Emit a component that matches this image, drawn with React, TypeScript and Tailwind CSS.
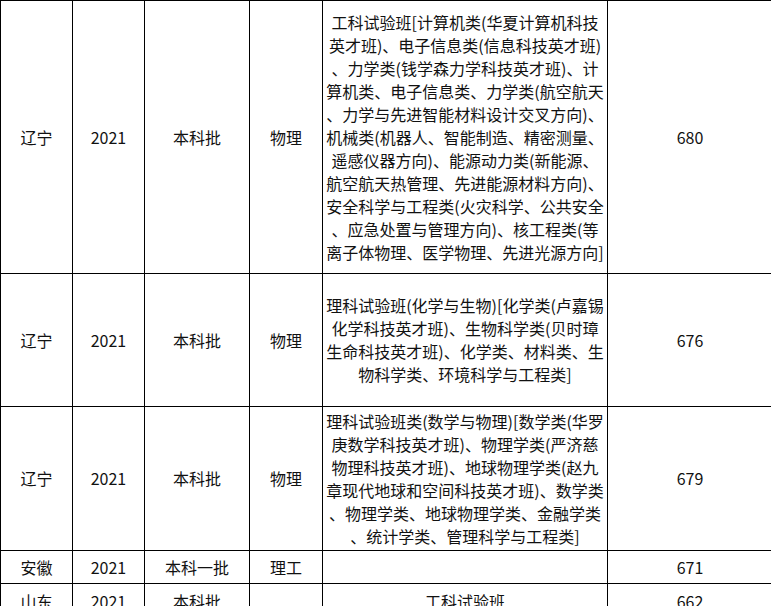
import React from 'react';

interface Row {
  province: string;
  year: string;
  batch: string;
  subject: string;
  major: string[];
  score: string;
  height: string;
}

const rows: Row[] = [
  {
    province: '辽宁',
    year: '2021',
    batch: '本科批',
    subject: '物理',
    major: [
      '工科试验班[计算机类(华夏计算机科技',
      '英才班)、电子信息类(信息科技英才班)',
      '、力学类(钱学森力学科技英才班)、计',
      '算机类、电子信息类、力学类(航空航天',
      '、力学与先进智能材料设计交叉方向)、',
      '机械类(机器人、智能制造、精密测量、',
      '遥感仪器方向)、能源动力类(新能源、',
      '航空航天热管理、先进能源材料方向)、',
      '安全科学与工程类(火灾科学、公共安全',
      '、应急处置与管理方向)、核工程类(等',
      '离子体物理、医学物理、先进光源方向]',
    ],
    score: '680',
    height: 'h-[273px]',
  },
  {
    province: '辽宁',
    year: '2021',
    batch: '本科批',
    subject: '物理',
    major: [
      '理科试验班(化学与生物)[化学类(卢嘉锡',
      '化学科技英才班)、生物科学类(贝时璋',
      '生命科技英才班)、化学类、材料类、生',
      '物科学类、环境科学与工程类]',
    ],
    score: '676',
    height: 'h-[133px]',
  },
  {
    province: '辽宁',
    year: '2021',
    batch: '本科批',
    subject: '物理',
    major: [
      '理科试验班类(数学与物理)[数学类(华罗',
      '庚数学科技英才班)、物理学类(严济慈',
      '物理科技英才班)、地球物理学类(赵九',
      '章现代地球和空间科技英才班)、数学类',
      '、物理学类、地球物理学类、金融学类',
      '、统计学类、管理科学与工程类]',
    ],
    score: '679',
    height: 'h-[144px]',
  },
  {
    province: '安徽',
    year: '2021',
    batch: '本科一批',
    subject: '理工',
    major: [],
    score: '671',
    height: 'h-[33px]',
  },
  {
    province: '山东',
    year: '2021',
    batch: '本科批',
    subject: '',
    major: ['工科试验班'],
    score: '662',
    height: 'h-[36px]',
  },
];

export default function App() {
  return (
    <div className="w-[771px] h-[606px] overflow-hidden bg-white">
      <table className="table-fixed border-collapse w-[772px] text-[16px] leading-[23px] text-[#111] font-['Noto_Sans_CJK_SC','Noto_Sans',sans-serif]">
        <colgroup>
          <col className="w-[72px]" />
          <col className="w-[72px]" />
          <col className="w-[105px]" />
          <col className="w-[73px]" />
          <col className="w-[285px]" />
          <col className="w-[165px]" />
        </colgroup>
        <tbody>
          {rows.map((r, i) => (
            <tr key={i}>
              <td className={`${r.height} border border-black text-center align-middle p-0`}>{r.province}</td>
              <td className="border border-black text-center align-middle p-0">{r.year}</td>
              <td className="border border-black text-center align-middle p-0">{r.batch}</td>
              <td className="border border-black text-center align-middle p-0">{r.subject}</td>
              <td className="border border-black text-center align-middle p-0">
                {r.major.map((line, j) => (
                  <div key={j} className="whitespace-nowrap">
                    {line}
                  </div>
                ))}
              </td>
              <td className="border border-black text-center align-middle p-0">{r.score}</td>
            </tr>
          ))}
        </tbody>
      </table>
    </div>
  );
}
